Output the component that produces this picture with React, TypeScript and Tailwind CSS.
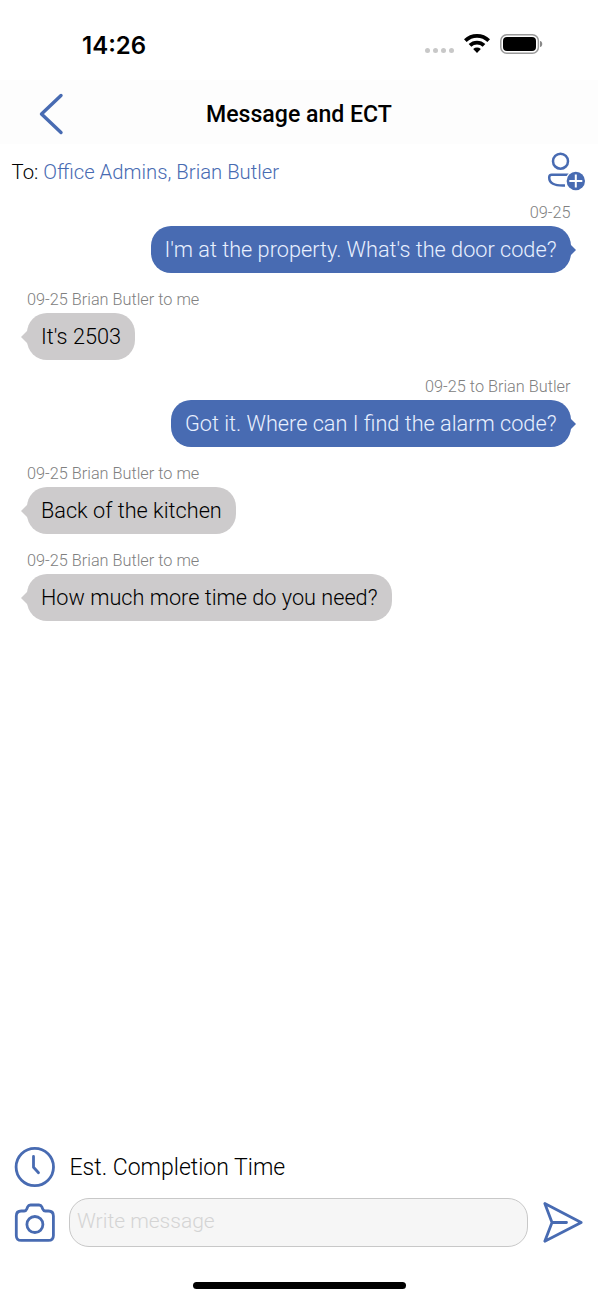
type Message = {
  meta: string;
  text: string;
  mine: boolean;
};

const messages: Message[] = [
  { meta: "09-25", text: "I'm at the property. What's the door code?", mine: true },
  { meta: "09-25 Brian Butler to me", text: "It's 2503", mine: false },
  { meta: "09-25 to Brian Butler", text: "Got it. Where can I find the alarm code?", mine: true },
  { meta: "09-25 Brian Butler to me", text: "Back of the kitchen", mine: false },
  { meta: "09-25 Brian Butler to me", text: "How much more time do you need?", mine: false },
];

function StatusBar() {
  return (
    <div className="flex h-20 shrink-0 items-start justify-between pl-[82px] pr-[55px]">
      <span className="mt-[30px] font-['Inter',sans-serif] text-[24px] leading-[31px] font-semibold">14:26</span>
      <div className="mt-[33px] flex items-start">
        <div className="mt-[14.5px] flex gap-[2.5px]">
          <i className="size-[5.5px] rounded-full bg-[#c8c8c8]" />
          <i className="size-[5.5px] rounded-full bg-[#c8c8c8]" />
          <i className="size-[5.5px] rounded-full bg-[#c8c8c8]" />
          <i className="size-[5.5px] rounded-full bg-[#c8c8c8]" />
        </div>
        <svg className="ml-[10px]" width="26" height="20" viewBox="0 0 26 20" fill="none" stroke="#000" strokeWidth="3.8">
          <path d="M1.3 7.6a16.6 16.6 0 0 1 23.4 0" />
          <path d="M6 12.4a10 10 0 0 1 14 0" />
          <path d="M13 20l-3.8-4a5.6 5.6 0 0 1 7.6 0z" fill="#000" stroke="none" />
        </svg>
        <svg className="ml-[10px] mt-px" width="43" height="20" viewBox="0 0 43 20" fill="none">
          <rect x="0.8" y="0.8" width="37.6" height="18.4" rx="6" stroke="#999" strokeWidth="1.5" />
          <rect x="3" y="3" width="33" height="14" rx="4" fill="#000" />
          <path d="M40 7c3 .4 3 5.6 0 6z" fill="#888" />
        </svg>
      </div>
    </div>
  );
}

function Bubble({ message }: { message: Message }) {
  const { mine } = message;
  return (
    <div className={mine ? "flex h-[87px] flex-col items-end" : "flex h-[87px] flex-col items-start"}>
      <div className="h-[26px] text-[16.3px] leading-[26px] font-light whitespace-nowrap text-[#808080]">{message.meta}</div>
      <div
        className={`relative h-[47px] rounded-[20px] px-[14px] text-[21.7px] leading-[48px] font-light whitespace-nowrap ${
          mine ? "bg-[#486bb2] text-[#e8f0ff]" : "bg-[#cdcbcc] text-black"
        }`}
      >
        {message.text}
        <svg
          className={mine ? "absolute top-[16px] -right-[5px]" : "absolute top-[16px] -left-[6px] rotate-180"}
          width="8"
          height="16"
          viewBox="0 0 8 16"
        >
          <path d="M0 0l8 8-8 8z" fill={mine ? "#486bb2" : "#cdcbcc"} />
        </svg>
      </div>
    </div>
  );
}

export default function App() {
  return (
    <div className="flex h-[1300px] w-[598px] flex-col overflow-hidden bg-white font-['Roboto',sans-serif] text-black">
      <StatusBar />

      <header className="grid h-16 shrink-0 grid-cols-[64px_1fr_64px] bg-[#fdfdfd]">
        <button aria-label="Back" className="pl-[39px]">
          <svg width="25" height="42" viewBox="0 0 25 42" fill="none" stroke="#486bb2" strokeWidth="3.4" strokeLinecap="round" strokeLinejoin="round" className="mt-[4px]">
            <path d="M22 2.5L2.5 21 22 39.5" />
          </svg>
        </button>
        <h1 className="pt-[19px] text-center text-[23.1px] leading-[32px] font-medium">Message and ECT</h1>
      </header>

      <div className="flex h-14 shrink-0 items-start justify-between pl-[11.5px] pr-3">
        <p className="pt-[12px] text-[20.3px] leading-[32px] font-light">
          To: <span className="text-[#486bb2]">Office Admins, Brian Butler</span>
        </p>
        <svg width="39" height="39" viewBox="0 0 39 39" fill="none" className="mt-[8px]">
          <circle cx="13.5" cy="9.2" r="7.5" stroke="#486bb2" strokeWidth="2.5" />
          <path d="M22.500 22.800H4.800C3 22.800 2.200 24 2.200 25.400C2.200 31 7 34 18 33.500" stroke="#486bb2" strokeWidth="2.5" />
          <circle cx="28.8" cy="29" r="10.5" fill="#fff" />
          <circle cx="28.8" cy="29" r="9.2" fill="#486bb2" />
          <path d="M28.8 22.5v13M22.3 29h13" stroke="#fff" strokeWidth="2" />
        </svg>
      </div>

      <main className="flex flex-1 flex-col pl-[27px] pr-[27.5px]">
        {messages.map((message) => (
          <Bubble key={message.text} message={message} />
        ))}
      </main>

      <footer className="flex h-[160px] shrink-0 flex-col">
        <div className="flex h-[56px] items-start pl-[14px]">
          <svg width="42" height="42" viewBox="0 0 42 42" fill="none" stroke="#486bb2" strokeWidth="2.8" strokeLinecap="round" strokeLinejoin="round" className="mt-[6px]">
            <circle cx="20.8" cy="21" r="18.7" />
            <path d="M19.5 10.5v10.8l5 5.5" />
          </svg>
          <span className="mt-[12px] ml-[13.5px] text-[23px] leading-[32px] font-light">Est. Completion Time</span>
        </div>
        <div className="flex h-[50px] items-start pl-[14px]">
          <svg width="42" height="42" viewBox="0 0 42 42" fill="none" stroke="#486bb2" strokeWidth="2.8" strokeLinecap="round" strokeLinejoin="round" className="mt-[6px]">
            <path d="M2.300 14Q2.300 9 7.300 9H10.200Q12 9 12.800 7L13.700 4.800Q14.500 3 16.500 3H25Q27 3 27.800 4.800L28.700 7Q29.500 9 31.300 9H34.400Q39.400 9 39.400 14V33.400Q39.400 38.400 34.400 38.400H7.300Q2.300 38.400 2.300 33.400Z" />
            <circle cx="20.9" cy="22.5" r="8" />
          </svg>
          <input
            aria-label="Message"
            placeholder="Write message"
            className="mt-[2px] ml-[13px] h-[49px] w-[459px] rounded-[20px] border border-[#c8c8c8] bg-[#f6f6f6] px-[7px] pb-[4px] text-[21px] font-light outline-none placeholder:text-[#d4d4d4]"
          />
          <svg width="42" height="44" viewBox="0 0 42 44" fill="none" stroke="#486bb2" strokeWidth="2.8" strokeLinecap="round" strokeLinejoin="round" className="mt-[4px] ml-[14px]">
            <path d="M2.8 3.5L39.2 22.5L2.8 41.2L10 22.5ZM10 22.5H24.5" />
          </svg>
        </div>
        <div className="mx-auto mt-[36px] h-[7px] w-[213px] rounded-full bg-black" />
      </footer>
    </div>
  );
}
